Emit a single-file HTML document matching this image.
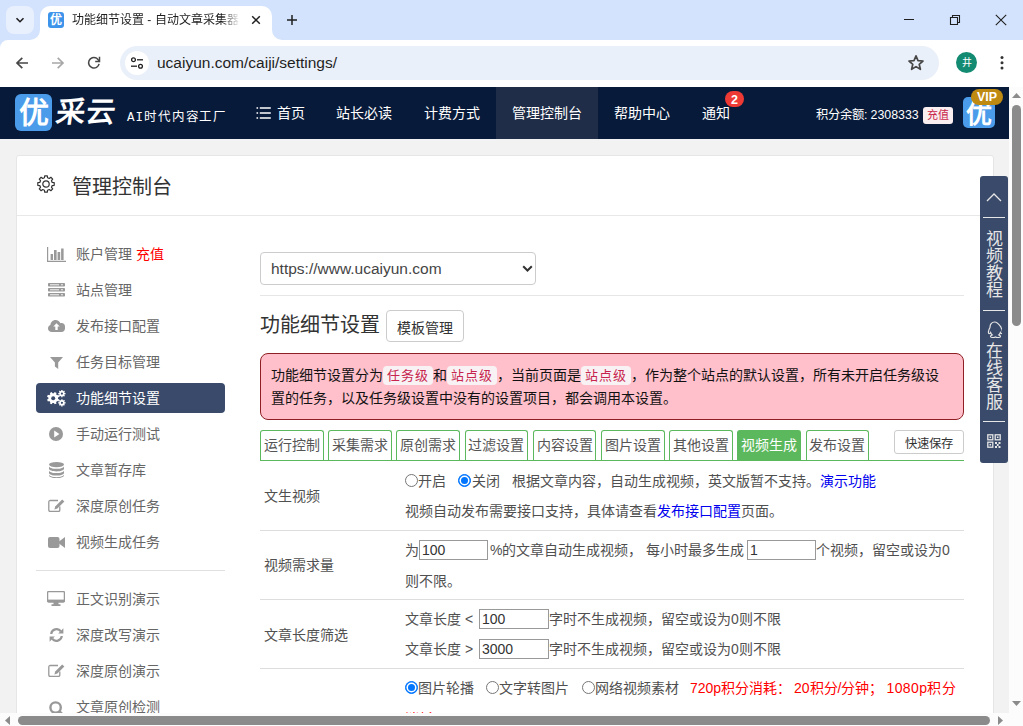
<!DOCTYPE html>
<html lang="zh-CN"><head><meta charset="utf-8">
<style>
*{box-sizing:border-box;margin:0;padding:0}
html,body{width:1023px;height:726px;overflow:hidden;background:#fff}
body{position:relative;font-family:"Liberation Sans",sans-serif;color:#333}
.abs{position:absolute}
#tabstrip{left:0;top:0;width:1023px;height:40px;background:#d3e3fd}
#toolbar{left:0;top:40px;width:1023px;height:47px;background:#fff}
.nowrap{white-space:nowrap}
.nav{position:absolute;white-space:nowrap;top:103px;color:#fff;font-weight:500;font-size:14px;line-height:20px}
.t{position:absolute;white-space:nowrap;font-size:14px;line-height:20px;color:#505050}
.side{position:absolute;white-space:nowrap;font-size:14px;line-height:20px;color:#666;left:76px}
.ico{position:absolute}
.tab{position:absolute;top:430px;height:31px;width:63.6px;border:1px solid #5cb85c;border-bottom:none;border-radius:3px 3px 0 0;background:#fff;font-size:14px;line-height:29px;text-align:center;color:#555;white-space:nowrap}
.inp{position:absolute;height:20px;border:1px solid #999;background:#fff;font-size:14px;line-height:18px;padding-left:2px;color:#333;white-space:nowrap}
.radio{position:absolute;width:13px;height:13px;border-radius:50%;border:1px solid #767676;background:#fff}
.radio.on{border:1px solid #0075ff;background:#0075ff}
.radio.on::after{content:"";position:absolute;left:2px;top:2px;width:7px;height:7px;border-radius:50%;background:#0075ff;box-shadow:0 0 0 1.5px #fff}
.hr{position:absolute;height:1px;background:#e2e2e2}
.code{display:inline-block;font-size:13px;line-height:19px;padding:0 4px;letter-spacing:1px;background:#f9f2f4;color:#c7254e;border-radius:4px;vertical-align:top}
.a{color:#0000ee}
</style></head><body>
<!-- TAB STRIP -->
<div id="tabstrip" class="abs">
  <div class="abs" style="left:6px;top:6px;width:28px;height:28px;border-radius:8px;background:#e8effd"></div>
  <svg class="abs" style="left:14px;top:14px" width="12" height="12" viewBox="0 0 12 12"><path d="M2.5 4.2 L6 7.7 L9.5 4.2" fill="none" stroke="#1f1f1f" stroke-width="1.6"/></svg>
  <!-- active tab -->
  <div class="abs" style="left:40px;top:6px;width:232px;height:34px;background:#fff;border-radius:10px 10px 0 0"></div>
  <svg class="abs" style="left:30px;top:30px" width="10" height="10" viewBox="0 0 10 10"><path d="M0 10 A10 10 0 0 0 10 0 L10 10 Z" fill="#fff"/></svg>
  <svg class="abs" style="left:272px;top:30px" width="10" height="10" viewBox="0 0 10 10"><path d="M0 0 A10 10 0 0 0 10 10 L0 10 Z" fill="#fff"/></svg>
  <div class="abs" style="left:48px;top:12px;width:16px;height:16px;border-radius:3px;background:#3d94ea;color:#fff;font-size:12px;line-height:16px;text-align:center;font-weight:bold">优</div>
  <div class="abs nowrap" style="left:72px;top:11px;width:168px;height:18px;overflow:hidden;font-size:12px;line-height:18px;color:#1f1f1f;-webkit-mask-image:linear-gradient(to right,#000 150px,transparent 168px)">功能细节设置 - 自动文章采集器</div>
  <svg class="abs" style="left:250px;top:14px" width="12" height="12" viewBox="0 0 12 12"><path d="M2.2 2.2 L9.8 9.8 M9.8 2.2 L2.2 9.8" stroke="#1f1f1f" stroke-width="1.5"/></svg>
  <svg class="abs" style="left:286px;top:14px" width="12" height="12" viewBox="0 0 12 12"><path d="M6 1 V11 M1 6 H11" stroke="#1f1f1f" stroke-width="1.5"/></svg>
  <!-- window controls -->
  <svg class="abs" style="left:903px;top:14px" width="12" height="12" viewBox="0 0 12 12"><path d="M1 5.5 H11" stroke="#1f1f1f" stroke-width="1"/></svg>
  <svg class="abs" style="left:949px;top:14px" width="12" height="12" viewBox="0 0 12 12"><path d="M1.5 3.5 H8.5 V10.5 H1.5 Z M3.5 3.5 V1.5 H10.5 V8.5 H8.5" fill="none" stroke="#1f1f1f" stroke-width="1.1"/></svg>
  <svg class="abs" style="left:995px;top:14px" width="12" height="12" viewBox="0 0 12 12"><path d="M0.8 0.8 L11.2 11.2 M11.2 0.8 L0.8 11.2" stroke="#1f1f1f" stroke-width="1.1"/></svg>
</div>

<!-- TOOLBAR -->
<div id="toolbar" class="abs">
  <svg class="abs" style="left:15px;top:16px" width="14" height="14" viewBox="0 0 14 14"><path d="M13 7 H2.5 M7.3 1.8 L2 7 L7.3 12.2" fill="none" stroke="#474747" stroke-width="1.7"/></svg>
  <svg class="abs" style="left:51px;top:16px" width="14" height="14" viewBox="0 0 14 14"><path d="M1 7 H11.5 M6.7 1.8 L12 7 L6.7 12.2" fill="none" stroke="#a8a8a8" stroke-width="1.7"/></svg>
  <svg class="abs" style="left:87px;top:16px" width="14" height="14" viewBox="0 0 14 14"><path d="M12.1 7.9 A5.3 5.3 0 1 1 9.5 2.1 L12.3 5" fill="none" stroke="#474747" stroke-width="1.5"/><path d="M12.5 0.8 V5.6 H8.2" fill="none" stroke="#474747" stroke-width="1.5"/></svg>
  <div class="abs" style="left:120px;top:6px;width:819px;height:34px;border-radius:17px;background:#eaf0f9"></div>
  <div class="abs" style="left:125px;top:11px;width:24px;height:24px;border-radius:12px;background:#fff"></div>
  <svg class="abs" style="left:129px;top:15px" width="16" height="16" viewBox="0 0 16 16"><circle cx="4.5" cy="4.8" r="1.9" fill="none" stroke="#1f1f1f" stroke-width="1.3"/><path d="M8 4.8 H14" stroke="#1f1f1f" stroke-width="1.3"/><circle cx="11.5" cy="11.2" r="1.9" fill="none" stroke="#1f1f1f" stroke-width="1.3"/><path d="M2 11.2 H8" stroke="#1f1f1f" stroke-width="1.3"/></svg>
  <div class="abs nowrap" style="left:157px;top:13px;font-size:15.5px;line-height:20px;color:#1f1f1f">ucaiyun.com/caiji/settings/</div>
  <svg class="abs" style="left:907px;top:14px" width="18" height="18" viewBox="0 0 18 18"><path d="M9 1.8 L11 6.6 L16 7 L12.2 10.3 L13.4 15.3 L9 12.6 L4.6 15.3 L5.8 10.3 L2 7 L7 6.6 Z" fill="none" stroke="#474747" stroke-width="1.7" stroke-linejoin="round"/></svg>
  <div class="abs" style="left:956px;top:12px;width:21px;height:21px;border-radius:50%;background:#138a72;color:#fff;font-size:10px;line-height:21px;text-align:center">井</div>
  <svg class="abs" style="left:997px;top:14px" width="10" height="18" viewBox="0 0 10 18"><circle cx="5" cy="3.5" r="1.5" fill="#333"/><circle cx="5" cy="8.8" r="1.5" fill="#333"/><circle cx="5" cy="14.1" r="1.5" fill="#333"/></svg>
</div>


<svg class="abs" style="left:0;top:40px" width="8" height="8" viewBox="0 0 8 8"><path d="M0 0H8A8 8 0 0 0 0 8Z" fill="#d3e3fd"/></svg>
<div class="abs" style="left:0;top:87px;width:1009px;height:626px;background:#f2f2f2"></div>
<div class="abs" style="left:0;top:87px;width:1009px;height:52px;background:#081a3a"></div>
<div class="abs" style="left:15px;top:94px;width:37px;height:37px;border-radius:6px;background:#4a9cea;color:#fff;font-weight:900;font-size:30px;line-height:38px;text-align:center">优</div>
<div class="abs nowrap" style="left:56px;top:94px;color:#fff;font-weight:900;font-size:29px;line-height:37px;letter-spacing:1px;transform:skewX(-8deg)">采云</div>
<div class="abs nowrap" style="left:127px;top:108px;color:#fff;font-family:'Liberation Mono',monospace;font-weight:normal;font-size:12.5px;line-height:20px;letter-spacing:0.9px">AI时代内容工厂</div>
<div class="abs" style="left:496px;top:87px;width:102px;height:52px;background:#1f2d48"></div>
<svg class="abs" style="left:256px;top:106px" width="16" height="14" viewBox="0 0 16 14"><path d="M0.5 2h1.6M0.5 7h1.6M0.5 12h1.6M3.8 2h11M3.8 7h11M3.8 12h11" stroke="#fff" stroke-width="1.3"/></svg>
<div class="nav" style="left:277px">首页</div>
<div class="nav" style="left:336px">站长必读</div>
<div class="nav" style="left:424px">计费方式</div>
<div class="nav" style="left:512px">管理控制台</div>
<div class="nav" style="left:614px">帮助中心</div>
<div class="nav" style="left:702px">通知</div>
<div class="abs" style="left:725px;top:91px;width:19px;height:16px;border-radius:8px;background:#ee3a35;color:#fff;font-weight:bold;font-size:12.5px;line-height:18px;text-align:center">2</div>
<div class="abs nowrap" style="left:816px;top:104.5px;color:#fff;font-size:12.3px;line-height:20px">积分余额:</div>
<div class="abs nowrap" style="left:870.5px;top:104.5px;color:#fff;font-size:12.4px;line-height:20px">2308333</div>
<div class="abs" style="left:923px;top:107px;width:30px;height:17px;border-radius:3px;background:#f9eef0;color:#c9254a;font-size:11px;line-height:17px;text-align:center">充值</div>
<div class="abs" style="left:963px;top:97px;width:32px;height:31px;border-radius:5px;background:#4a9cea;color:#fff;font-weight:900;font-size:26px;line-height:35px;text-align:center">优</div>
<div class="abs" style="left:971px;top:89px;width:32px;height:16px;border-radius:8px;background:#bf8a12;color:#fff;font-weight:bold;font-size:12.5px;line-height:16px;text-align:center">VIP</div>
<div class="abs" style="left:16px;top:155px;width:978px;height:700px;background:#fff;border:1px solid #e6e6e6;border-radius:3px"></div>
<svg class="abs" style="left:37px;top:175px" width="18" height="18" viewBox="0 0 18 18"><path d="M7.45 2.79 L7.70 0.80 L10.30 0.80 L10.55 2.79 L12.30 3.51 L13.88 2.29 L15.71 4.12 L14.49 5.70 L15.21 7.45 L17.20 7.70 L17.20 10.30 L15.21 10.55 L14.49 12.30 L15.71 13.88 L13.88 15.71 L12.30 14.49 L10.55 15.21 L10.30 17.20 L7.70 17.20 L7.45 15.21 L5.70 14.49 L4.12 15.71 L2.29 13.88 L3.51 12.30 L2.79 10.55 L0.80 10.30 L0.80 7.70 L2.79 7.45 L3.51 5.70 L2.29 4.12 L4.12 2.29 L5.70 3.51Z" fill="none" stroke="#333" stroke-width="1.2" stroke-linejoin="round"/><circle cx="9" cy="9" r="3.2" fill="none" stroke="#333" stroke-width="1.2"/></svg>
<div class="t" style="left:72px;top:173.0px;font-size:20px;line-height:28px;color:#333">管理控制台</div>
<div class="hr" style="left:17px;top:215px;width:976px;background:#e8e8e8"></div>
<div class="abs" style="left:36px;top:383px;width:189px;height:30px;border-radius:4px;background:#3a4a6a"></div>
<div class="hr" style="left:36px;top:570px;width:189px;background:#e0e0e0"></div>
<div class="side" style="left:76px;top:244.0px">账户管理 <span style="color:#f00">充值</span></div>
<div class="side" style="left:76px;top:280.0px">站点管理</div>
<div class="side" style="left:76px;top:316.0px">发布接口配置</div>
<div class="side" style="left:76px;top:352.0px">任务目标管理</div>
<div class="side" style="left:76px;top:388.0px;color:#fff">功能细节设置</div>
<div class="side" style="left:76px;top:424.0px">手动运行测试</div>
<div class="side" style="left:76px;top:460.0px">文章暂存库</div>
<div class="side" style="left:76px;top:496.0px">深度原创任务</div>
<div class="side" style="left:76px;top:532.0px">视频生成任务</div>
<div class="side" style="left:76px;top:589.0px">正文识别演示</div>
<div class="side" style="left:76px;top:625.0px">深度改写演示</div>
<div class="side" style="left:76px;top:661.0px">深度原创演示</div>
<div class="side" style="left:76px;top:697.0px">文章原创检测</div>
<svg class="ico" style="left:47px;top:247px" width="19" height="15" viewBox="0 0 19 15"><path d="M0.6 0v14.4H19" fill="none" stroke="#999" stroke-width="1.2"/><rect x="3.6" y="7" width="2.4" height="6" fill="#999"/><rect x="7" y="3" width="2.6" height="10" fill="#999"/><rect x="10.6" y="5" width="2.6" height="8" fill="#999"/><rect x="14.1" y="1.5" width="2.5" height="11.5" fill="#999"/></svg>
<svg class="ico" style="left:48px;top:283px" width="17" height="14" viewBox="0 0 17 14"><rect x="0" y="0" width="17" height="3.6" rx="0.8" fill="#999"/><rect x="0" y="5" width="17" height="3.6" rx="0.8" fill="#999"/><rect x="0" y="10" width="17" height="3.6" rx="0.8" fill="#999"/><path d="M2 1.8h9M2 6.8h9M2 11.8h9" stroke="#fff" stroke-width="0.9"/><circle cx="14" cy="1.8" r="0.8" fill="#fff"/><circle cx="14" cy="6.8" r="0.8" fill="#fff"/><circle cx="14" cy="11.8" r="0.8" fill="#fff"/></svg>
<svg class="ico" style="left:48px;top:319px" width="17" height="13" viewBox="0 0 17 13"><path d="M3.8 13C1.7 13 0 11.4 0 9.4c0-1.6 1-2.9 2.4-3.4C2.6 3.2 4.8 1 7.6 1c2.2 0 4 1.3 4.8 3.2.4-.1.8-.2 1.2-.2 1.9 0 3.4 1.5 3.4 3.4v2.2c0 1.9-1.5 3.4-3.4 3.4z" fill="#999"/><path d="M8.5 4.2l-3.2 3.3h2v3.6h2.4V7.5h2z" fill="#fff"/></svg>
<svg class="ico" style="left:50px;top:357px" width="13" height="12" viewBox="0 0 13 12"><path d="M0 0h13L8.2 5.4V12L4.9 9.6V5.4z" fill="#999"/></svg>
<svg class="ico" style="left:46px;top:390px" width="20" height="17" viewBox="0 0 20 17"><g fill="#fff"><path d="M12.03 9.01 L13.35 9.56 L12.51 11.58 L11.19 11.05 L10.05 12.19 L10.58 13.51 L8.56 14.35 L8.01 13.03 L6.39 13.03 L5.84 14.35 L3.82 13.51 L4.35 12.19 L3.21 11.05 L1.89 11.58 L1.05 9.56 L2.37 9.01 L2.37 7.39 L1.05 6.84 L1.89 4.82 L3.21 5.35 L4.35 4.21 L3.82 2.89 L5.84 2.05 L6.39 3.37 L8.01 3.37 L8.56 2.05 L10.58 2.89 L10.05 4.21 L11.19 5.35 L12.51 4.82 L13.35 6.84 L12.03 7.39Z"/><path d="M18.63 2.97 L19.53 2.89 L19.53 4.31 L18.63 4.23 L18.27 5.08 L18.97 5.67 L17.97 6.67 L17.38 5.97 L16.53 6.33 L16.61 7.23 L15.19 7.23 L15.27 6.33 L14.42 5.97 L13.83 6.67 L12.83 5.67 L13.53 5.08 L13.17 4.23 L12.27 4.31 L12.27 2.89 L13.17 2.97 L13.53 2.12 L12.83 1.53 L13.83 0.53 L14.42 1.23 L15.27 0.87 L15.19 -0.03 L16.61 -0.03 L16.53 0.87 L17.38 1.23 L17.97 0.53 L18.97 1.53 L18.27 2.12Z"/><path d="M18.63 12.17 L19.53 12.09 L19.53 13.51 L18.63 13.43 L18.27 14.28 L18.97 14.87 L17.97 15.87 L17.38 15.17 L16.53 15.53 L16.61 16.43 L15.19 16.43 L15.27 15.53 L14.42 15.17 L13.83 15.87 L12.83 14.87 L13.53 14.28 L13.17 13.43 L12.27 13.51 L12.27 12.09 L13.17 12.17 L13.53 11.32 L12.83 10.73 L13.83 9.73 L14.42 10.43 L15.27 10.07 L15.19 9.17 L16.61 9.17 L16.53 10.07 L17.38 10.43 L17.97 9.73 L18.97 10.73 L18.27 11.32Z"/></g><circle cx="7.2" cy="8.2" r="2" fill="#3a4a6a"/><circle cx="15.9" cy="3.6" r="1.1" fill="#3a4a6a"/><circle cx="15.9" cy="12.8" r="1.1" fill="#3a4a6a"/></svg>
<svg class="ico" style="left:49px;top:427px" width="14" height="14" viewBox="0 0 14 14"><circle cx="7" cy="7" r="7" fill="#999"/><path d="M5.2 3.6v6.8L10.4 7z" fill="#fff"/></svg>
<svg class="ico" style="left:49px;top:462px" width="15" height="16" viewBox="0 0 15 16"><ellipse cx="7.5" cy="2.6" rx="7.5" ry="2.6" fill="#999"/><path d="M0 4.2c0 1.5 3.4 2.6 7.5 2.6S15 5.7 15 4.2v2.6c0 1.5-3.4 2.6-7.5 2.6S0 8.3 0 6.8z" fill="#999"/><path d="M0 8.4c0 1.5 3.4 2.6 7.5 2.6S15 9.9 15 8.4V11c0 1.5-3.4 2.6-7.5 2.6S0 12.5 0 11z" fill="#999"/><path d="M0 12.6c0 1.5 3.4 2.6 7.5 2.6S15 14.1 15 12.6v.8c0 1.5-3.4 2.6-7.5 2.6S0 14.9 0 13.4z" fill="#999"/></svg>
<svg class="ico" style="left:48px;top:499px" width="17" height="13" viewBox="0 0 17 13"><path d="M10 1.5H2.2c-.8 0-1.4.6-1.4 1.4v8.2c0 .8.6 1.4 1.4 1.4h8.2c.8 0 1.4-.6 1.4-1.4V7.5" fill="none" stroke="#999" stroke-width="1.3"/><path d="M14.2 0.4l2.2 2.2-7 7-3 .8.8-3z" fill="#999"/></svg>
<svg class="ico" style="left:48px;top:537px" width="17" height="11" viewBox="0 0 17 11"><rect x="0" y="0" width="11.5" height="11" rx="2" fill="#999"/><path d="M11 4.5L17 0v11L11 6.5z" fill="#999"/></svg>
<svg class="ico" style="left:47px;top:591px" width="18" height="15" viewBox="0 0 18 15"><rect x="0.6" y="0.6" width="16.8" height="10.4" rx="1" fill="none" stroke="#999" stroke-width="1.3"/><rect x="0.6" y="8.6" width="16.8" height="2.4" fill="#999"/><path d="M6.5 11h5v2.2h2V15h-9v-1.8h2z" fill="#999"/></svg>
<svg class="ico" style="left:49px;top:628px" width="15" height="14" viewBox="0 0 15 14"><path d="M2.2 6A5.4 5.4 0 0 1 11.8 3.2" fill="none" stroke="#999" stroke-width="2.2"/><path d="M14.4 0.2v5.2H9.2z" fill="#999"/><path d="M12.8 8A5.4 5.4 0 0 1 3.2 10.8" fill="none" stroke="#999" stroke-width="2.2"/><path d="M0.6 13.8V8.6h5.2z" fill="#999"/></svg>
<svg class="ico" style="left:48px;top:664px" width="17" height="13" viewBox="0 0 17 13"><path d="M10 1.5H2.2c-.8 0-1.4.6-1.4 1.4v8.2c0 .8.6 1.4 1.4 1.4h8.2c.8 0 1.4-.6 1.4-1.4V7.5" fill="none" stroke="#999" stroke-width="1.3"/><path d="M14.2 0.4l2.2 2.2-7 7-3 .8.8-3z" fill="#999"/></svg>
<svg class="ico" style="left:49px;top:701px" width="15" height="15" viewBox="0 0 15 15"><circle cx="6.6" cy="6.6" r="5.2" fill="none" stroke="#999" stroke-width="2.4"/><path d="M10.4 10.4L14 14" stroke="#999" stroke-width="2.6"/></svg>
<div class="abs" style="left:260px;top:252px;width:276px;height:33px;border:1px solid #ccc;border-radius:4px;background:#fff"></div>
<div class="t" style="left:271px;top:258.5px;font-size:15.5px;color:#444">https://www.ucaiyun.com</div>
<svg class="abs" style="left:522px;top:265px" width="11" height="7" viewBox="0 0 11 7"><path d="M1.2 1.2l4.3 4.3 4.3-4.3" fill="none" stroke="#333" stroke-width="2"/></svg>
<div class="hr" style="left:260px;top:295px;width:704px;background:#e6e6e6"></div>
<div class="t" style="left:260px;top:311.0px;font-size:20px;line-height:28px;color:#333">功能细节设置</div>
<div class="abs" style="left:386px;top:310px;width:78px;height:32px;border:1px solid #ccc;border-radius:4px;background:#fff"></div>
<div class="t" style="left:397px;top:318.0px;color:#333">模板管理</div>
<div class="abs" style="left:260px;top:353px;width:704px;height:67px;border:1px solid #8e1f24;border-radius:8px;background:#ffc0cb"></div>
<div class="t" style="left:271px;top:366.0px;line-height:19px;color:#111">功能细节设置分为<span class="code">任务级</span>和<span class="code">站点级</span>，当前页面是<span class="code">站点级</span>，作为整个站点的默认设置，所有未开启任务级设</div>
<div class="t" style="left:271px;top:387.8px;color:#111">置的任务，以及任务级设置中没有的设置项目，都会调用本设置。</div>
<div class="tab" style="left:260.0px">运行控制</div>
<div class="tab" style="left:328.2px">采集需求</div>
<div class="tab" style="left:396.4px">原创需求</div>
<div class="tab" style="left:464.6px">过滤设置</div>
<div class="tab" style="left:532.8px">内容设置</div>
<div class="tab" style="left:601.0px">图片设置</div>
<div class="tab" style="left:669.2px">其他设置</div>
<div class="tab" style="left:737.4px;background:#5cb85c;color:#fff">视频生成</div>
<div class="tab" style="left:805.6px">发布设置</div>
<div class="hr" style="left:260px;top:460px;width:704px;background:#5cb85c"></div>
<div class="abs" style="left:894px;top:430px;width:70px;height:24px;border:1px solid #ccc;border-radius:3px;background:#fff;font-size:12.3px;line-height:21px;padding-top:3px;text-align:center;color:#333">快速保存</div>
<div class="hr" style="left:260px;top:530px;width:704px;background:#ddd"></div>
<div class="hr" style="left:260px;top:599px;width:704px;background:#ddd"></div>
<div class="hr" style="left:260px;top:668px;width:704px;background:#ddd"></div>
<div class="t" style="left:264px;top:486.0px">文生视频</div>
<div class="t" style="left:264px;top:554.5px">视频需求量</div>
<div class="t" style="left:264px;top:624.5px">文章长度筛选</div>
<div class="radio" style="left:405px;top:474px"></div>
<div class="t" style="left:418px;top:470.5px">开启</div>
<div class="radio on" style="left:458px;top:474px"></div>
<div class="t" style="left:472px;top:470.5px">关闭</div>
<div class="t" style="left:512px;top:470.5px">根据文章内容，自动生成视频，英文版暂不支持。<span class="a">演示功能</span></div>
<div class="t" style="left:405px;top:501.0px">视频自动发布需要接口支持，具体请查看<span class="a">发布接口配置</span>页面。</div>
<div class="t" style="left:405px;top:540.0px">为</div>
<div class="inp" style="left:419px;top:540px;width:69px">100</div>
<div class="t" style="left:490px;top:540.0px">%的文章自动生成视频，</div>
<div class="t" style="left:646px;top:540.0px">每小时最多生成</div>
<div class="inp" style="left:747px;top:540px;width:69px">1</div>
<div class="t" style="left:816px;top:540.0px">个视频，留空或设为0</div>
<div class="t" style="left:405px;top:570.5px">则不限。</div>
<div class="t" style="left:405px;top:609.0px">文章长度 &lt;</div>
<div class="inp" style="left:479px;top:609px;width:70px">100</div>
<div class="t" style="left:549px;top:609.0px">字时不生成视频，留空或设为0则不限</div>
<div class="t" style="left:405px;top:638.5px">文章长度 &gt;</div>
<div class="inp" style="left:479px;top:639px;width:70px">3000</div>
<div class="t" style="left:549px;top:638.5px">字时不生成视频，留空或设为0则不限</div>
<div class="radio on" style="left:405px;top:681px"></div>
<div class="t" style="left:418px;top:677.5px">图片轮播</div>
<div class="radio" style="left:486px;top:681px"></div>
<div class="t" style="left:499px;top:677.5px">文字转图片</div>
<div class="radio" style="left:582px;top:681px"></div>
<div class="t" style="left:595px;top:677.5px">网络视频素材</div>
<div class="t" style="left:690px;top:677.5px;color:#f00">720p积分消耗：</div>
<div class="t" style="left:794px;top:677.5px;color:#f00">20积分/分钟；</div>
<div class="t" style="left:886.5px;top:677.5px;color:#f00;letter-spacing:0.4px">1080p积分</div>
<div class="t" style="left:405px;top:709.0px;color:#f00;width:52px;overflow:hidden">消耗：40积分/分钟</div>
<div class="abs" style="left:980px;top:176px;width:28px;height:287px;border-radius:3px;background:#3a4a6a"></div>
<svg class="abs" style="left:986px;top:192px" width="16" height="10" viewBox="0 0 16 10"><path d="M1 9L8 2l7 7" fill="none" stroke="#e6e6e6" stroke-width="1.3"/></svg>
<div class="abs" style="left:983px;top:217px;width:22px;height:1px;background:#e6e6e6"></div>
<div class="abs" style="left:983px;top:310px;width:22px;height:1px;background:#e6e6e6"></div>
<div class="abs" style="left:983px;top:421px;width:22px;height:1px;background:#e6e6e6"></div>
<div class="abs" style="left:983px;top:231px;width:22px;font-size:17px;line-height:17px;color:#e6e6e6;text-align:center">视<br>频<br>教<br>程</div>
<svg class="abs" style="left:987px;top:321px" width="15" height="17" viewBox="0 0 15 17"><path d="M7.5 1C4.6 1 3 3.3 3 6.2c0 .8-.8 1.6-1.2 3-.5 1.6-.6 3.2.4 3.4.4 0 1-.5 1.4-1.1.3 1 .9 1.8 1.6 2.4-1 .4-1.7.9-1.7 1.5 0 .8 1.5 1.1 3 1.1 1 0 1.6-.2 2-.5.4.3 1 .5 2 .5 1.5 0 3-.3 3-1.1 0-.6-.7-1.1-1.7-1.5.7-.6 1.3-1.4 1.6-2.4.4.6 1 1.1 1.4 1.1 1-.2.9-1.8.4-3.4-.4-1.4-1.2-2.2-1.2-3C12 3.3 10.4 1 7.5 1z" fill="none" stroke="#e6e6e6" stroke-width="1.2"/></svg>
<div class="abs" style="left:983px;top:342.5px;width:22px;font-size:17px;line-height:17.3px;color:#e6e6e6;text-align:center">在<br>线<br>客<br>服</div>
<svg class="abs" style="left:987px;top:434px" width="14" height="14" viewBox="0 0 14 14"><g fill="none" stroke="#e6e6e6" stroke-width="1.3"><rect x="0.8" y="0.8" width="5" height="5"/><rect x="8.2" y="0.8" width="5" height="5"/><rect x="0.8" y="8.2" width="5" height="5"/></g><g fill="#e6e6e6"><rect x="2.5" y="2.5" width="1.6" height="1.6"/><rect x="9.9" y="2.5" width="1.6" height="1.6"/><rect x="2.5" y="9.9" width="1.6" height="1.6"/><rect x="8" y="8" width="2" height="2"/><rect x="11.5" y="8" width="2" height="2"/><rect x="9.8" y="10" width="1.8" height="2"/><rect x="8" y="12" width="2" height="2"/><rect x="11.5" y="12" width="2" height="2"/></g></svg>
<div class="abs" style="left:1009px;top:87px;width:14px;height:626px;background:#fcfcfc"></div>
<svg class="abs" style="left:1011px;top:92px" width="11" height="7" viewBox="0 0 11 7"><path d="M1 6h9L5.5 1z" fill="#8b8b8b"/></svg>
<div class="abs" style="left:1012px;top:105px;width:9px;height:221px;border-radius:4.5px;background:#8b8b8b"></div>
<svg class="abs" style="left:1011px;top:700px" width="11" height="7" viewBox="0 0 11 7"><path d="M1 1h9L5.5 6z" fill="#8b8b8b"/></svg>
<div class="abs" style="left:0;top:713px;width:1023px;height:13px;background:#fcfcfc"></div>
<svg class="abs" style="left:4px;top:715px" width="7" height="11" viewBox="0 0 7 11"><path d="M6 1v9L1 5.5z" fill="#8b8b8b"/></svg>
<div class="abs" style="left:18px;top:716px;width:972px;height:9px;border-radius:4.5px;background:#8b8b8b"></div>
<svg class="abs" style="left:997px;top:715px" width="7" height="11" viewBox="0 0 7 11"><path d="M1 1v9L6 5.5z" fill="#8b8b8b"/></svg>
</body></html>
